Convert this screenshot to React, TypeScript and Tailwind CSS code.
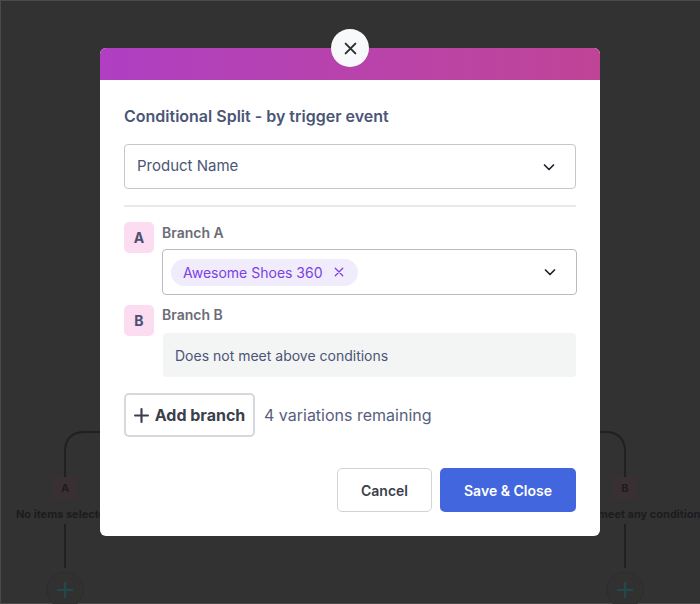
import React from "react";

const font = { fontFamily: "Inter, 'Noto Sans', 'Liberation Sans', sans-serif" };

function Chevron() {
  return (
    <svg width="16" height="16" viewBox="0 0 16 16" fill="none" stroke="#1f2430" strokeWidth="1.7" strokeLinecap="round" strokeLinejoin="round">
      <path d="M3.5 6l4.5 4.5L12.5 6" />
    </svg>
  );
}

function XIcon({ size = 12, color = "#1f2430", w = 1.8 }: { size?: number; color?: string; w?: number }) {
  return (
    <svg width={size} height={size} viewBox="0 0 12 12" fill="none" stroke={color} strokeWidth={w} strokeLinecap="round">
      <path d="M1.5 1.5l9 9M10.5 1.5l-9 9" />
    </svg>
  );
}

function Plus({ size = 14, color = "#3d4350", w = 2 }: { size?: number; color?: string; w?: number }) {
  return (
    <svg width={size} height={size} viewBox="0 0 14 14" fill="none" stroke={color} strokeWidth={w} strokeLinecap="round">
      <path d="M7 1v12M1 7h12" />
    </svg>
  );
}

export default function App() {
  return (
    <div className="relative w-[700px] h-[604px] overflow-hidden bg-[#323232] shadow-[inset_1px_1px_0_#4a4a4a,inset_0_-1px_0_#4a4a4a]" style={font}>
      {/* background diagram (canvas) */}
      <svg className="absolute left-0 top-0" width="700" height="604" fill="none">
        <path d="M65 478 V452 Q65 432 85 432 H110" stroke="#202020" strokeWidth="2" />
        <path d="M65 524 V568" stroke="#202020" strokeWidth="2" />
        <path d="M590 432 H605 Q625 432 625 452 V478" stroke="#202020" strokeWidth="2" />
        <path d="M625 524 V568" stroke="#202020" strokeWidth="2" />
        <circle cx="65" cy="590" r="18" stroke="#2d2d2d" strokeWidth="1" fill="#313131" />
        <circle cx="625" cy="590" r="18" stroke="#2d2d2d" strokeWidth="1" fill="#313131" />
        <path d="M65 582v16M57 590h16" stroke="#1e4a4c" strokeWidth="2" />
        <path d="M625 582v16M617 590h16" stroke="#1e4a4c" strokeWidth="2" />
      </svg>
      <div className="absolute left-[54px] top-[477px] w-[22px] h-[22px] rounded-[3px] bg-[#3a3034] flex items-center justify-center text-[11px] font-bold text-[#1c1c20]">A</div>
      <div className="absolute left-[614px] top-[477px] w-[22px] h-[22px] rounded-[3px] bg-[#3a3034] flex items-center justify-center text-[11px] font-bold text-[#1c1c20]">B</div>
      <div className="absolute left-[-36px] top-[506px] w-[200px] text-center text-[11px] font-bold text-[#1c1c20] whitespace-nowrap">No items selected</div>
      <div className="absolute left-[524px] top-[506px] w-[200px] text-center text-[11px] font-bold text-[#1c1c20] whitespace-nowrap">Does not meet any condition</div>

      {/* modal */}
      <div className="absolute left-[100px] top-[48px] w-[500px] bg-white rounded-[6px]">
        <div className="relative h-8 rounded-t-[6px] bg-gradient-to-r from-[#b03fc2] to-[#c04496]">
          <div className="absolute left-[231px] top-[-19px] w-[38px] h-[38px] rounded-full bg-[#f8f9fb] flex items-center justify-center">
            <XIcon size={13} color="#2a2e38" w={1.8} />
          </div>
        </div>
        <div className="px-6 pt-6 pb-6">
          <div className="text-[16px] leading-6 font-semibold text-[#4b5576]">Conditional Split - by trigger event</div>
          <div className="mt-4 h-[45px] border border-[#c6c7cc] rounded-[4px] flex items-center justify-between pl-3 pr-[18px]">
            <span className="text-[15px] text-[#4b5574]">Product Name</span>
            <Chevron />
          </div>
          <div className="mt-4 h-[2px] bg-[#e8e9ec]" />

          <div className="mt-[15px] flex gap-2">
            <div className="w-[30px] h-[31px] shrink-0 rounded-[5px] bg-[#fbdcf0] flex items-center justify-center text-[14px] font-bold text-[#4a5070]">A</div>
            <div className="flex-1">
              <div className="text-[14px] leading-5 font-semibold text-[#6b6c76] mt-[1px]">Branch A</div>
              <div className="mt-[6px] h-[46px] border border-[#b9bbc2] rounded-[4px] flex items-center justify-between pl-2 pr-[18px] mr-[-1px]">
                <div className="h-[27px] rounded-full bg-[#f0ecfc] flex items-center pl-3 pr-[14px] gap-[11px]">
                  <span className="text-[14px] text-[#7b3fe4]">Awesome Shoes 360</span>
                  <XIcon size={10} color="#7b3fe4" w={1.5} />
                </div>
                <Chevron />
              </div>
            </div>
          </div>

          <div className="mt-[10px] flex gap-2">
            <div className="w-[30px] h-[31px] shrink-0 rounded-[5px] bg-[#fbdcf0] flex items-center justify-center text-[14px] font-bold text-[#4a5070]">B</div>
            <div className="flex-1">
              <div className="text-[14px] leading-5 font-semibold text-[#6b6c76]">Branch B</div>
              <div className="mt-2 h-[44px] rounded-[4px] bg-[#f3f4f4] flex items-center pl-3 ml-[1px]">
                <span className="text-[14px] text-[#4b5574]">Does not meet above conditions</span>
              </div>
            </div>
          </div>

          <div className="mt-4 flex items-center gap-[9px]">
            <div className="h-[44px] w-[131px] border-2 border-[#d5d8dd] rounded-[5px] flex items-center justify-center gap-[6px]">
              <Plus size={15} color="#3a3f4b" w={2} />
              <span className="text-[16px] font-bold text-[#3a3f4b]">Add branch</span>
            </div>
            <span className="text-[16px] text-[#56607e]">4 variations remaining</span>
          </div>

          <div className="mt-[31px] flex justify-end gap-2">
            <div className="h-[44px] w-[95px] border border-[#d0d3d8] rounded-[5px] flex items-center justify-center text-[14px] font-semibold text-[#3a3f4b]">Cancel</div>
            <div className="h-[44px] w-[136px] rounded-[5px] bg-[#4266dd] flex items-center justify-center text-[14px] font-semibold text-white">Save &amp; Close</div>
          </div>
        </div>
      </div>
    </div>
  );
}
